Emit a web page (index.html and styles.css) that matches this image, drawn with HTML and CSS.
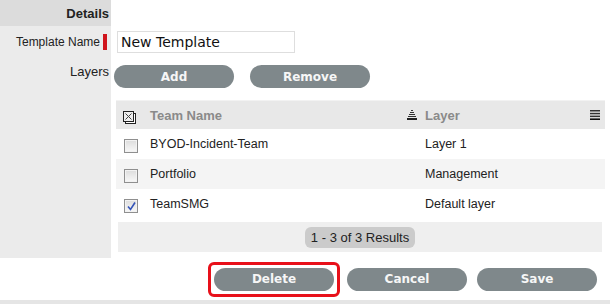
FILE: index.html
```html
<!DOCTYPE html>
<html lang="en">
<head>
    <meta charset="UTF-8">
    <title>Team Template</title>
    <link rel="stylesheet" href="styles.css">
</head>
<body>

<div class="form">
    <div class="label head">Details</div>
    <div class="field"></div>

    <div class="label name-label">Template Name<span class="req-bar"></span></div>
    <div class="field name-field">
        <input class="text-input" type="text" value="New Template">
    </div>

    <div class="label layers-label">Layers</div>
    <div class="field layers-field">
        <div class="btn-row">
            <button class="btn">Add</button>
            <button class="btn">Remove</button>
        </div>
        <table class="grid">
            <colgroup>
                <col class="col-check">
                <col class="col-name">
                <col>
            </colgroup>
            <thead>
                <tr>
                    <th>
                        <svg class="all-icon" width="13" height="13" viewBox="0 0 13 13">
                            <rect x="2.5" y="2.5" width="10" height="10" fill="#fff" stroke="#222"/>
                            <rect x="0.5" y="0.5" width="10" height="10" fill="#eee" stroke="#222"/>
                            <path d="M2.5 2.5 L8.5 8.5 M8.5 2.5 L2.5 8.5" stroke="#444" stroke-width="1"/>
                        </svg>
                    </th>
                    <th>Team Name</th>
                    <th>
                        <div class="th-layer">
                            <svg class="sort-icon" width="10" height="10" viewBox="0 0 10 10">
                                <rect x="4" y="0" width="2" height="1" fill="#333"/>
                                <rect x="3" y="2" width="4" height="1" fill="#333"/>
                                <rect x="2" y="4" width="6" height="1" fill="#333"/>
                                <rect x="1" y="6" width="8" height="1" fill="#333"/>
                                <rect x="0" y="8" width="10" height="2" fill="#222"/>
                            </svg>
                            <span>Layer</span>
                            <svg class="menu-icon" width="10" height="10" viewBox="0 0 10 10">
                                <rect x="0" y="0" width="10" height="1.5" fill="#333"/>
                                <rect x="0" y="2.8" width="10" height="1.5" fill="#333"/>
                                <rect x="0" y="5.6" width="10" height="1.5" fill="#333"/>
                                <rect x="0" y="8.4" width="10" height="1.6" fill="#111"/>
                            </svg>
                        </div>
                    </th>
                </tr>
            </thead>
            <tbody>
                <tr>
                    <td><span class="cbox"></span></td>
                    <td>BYOD-Incident-Team</td>
                    <td class="layer">Layer 1</td>
                </tr>
                <tr class="alt">
                    <td><span class="cbox"></span></td>
                    <td>Portfolio</td>
                    <td class="layer">Management</td>
                </tr>
                <tr>
                    <td>
                        <span class="cbox">
                            <svg width="11" height="11" viewBox="0 0 11 11">
                                <path d="M2 5.5 L4.5 8.5 L9 1.5" fill="none" stroke="#3554b8" stroke-width="1.6"/>
                            </svg>
                        </span>
                    </td>
                    <td>TeamSMG</td>
                    <td class="layer">Default layer</td>
                </tr>
            </tbody>
        </table>
        <div class="pager">
            <span class="pager-pill">1 - 3 of 3 Results</span>
        </div>
    </div>
</div>

<div class="actions">
    <div class="highlight">
        <button class="btn">Delete</button>
    </div>
    <button class="btn cancel">Cancel</button>
    <button class="btn">Save</button>
</div>
<div class="bottom-strip"></div>

</body>
</html>
```

FILE: styles.css
```css
body {
    margin: 0;
    width: 610px;
    height: 304px;
    overflow: hidden;
    background: white;
    font-family: "Liberation Sans", Arial, sans-serif;
    font-size: 13px;
    color: #222;
}
.form {
    display: grid;
    grid-template-columns: 111px 1fr;
    grid-template-rows: 26px 32px auto;
}
.label {
    background: #ebebeb;
    display: flex;
    justify-content: flex-end;
    align-items: center;
    padding-right: 2px;
    line-height: 15px;
    color: #222;
}
.label.head {
    background: #dcdcdc;
    font-weight: bold;
}
.name-label {
    font-size: 12px;
}
.req-bar {
    display: inline-block;
    width: 4px;
    height: 16px;
    background: #d0141c;
    margin-left: 3px;
    margin-right: 2px;
}
.layers-label {
    align-items: flex-start;
    padding-top: 6px;
}
.field {
    padding: 0 5px;
}
.name-field {
    padding-top: 5px;
}
.text-input {
    box-sizing: border-box;
    width: 178px;
    height: 22px;
    margin-left: 1px;
    border: 1px solid #dedede;
    padding: 0 3px;
    font-family: "DejaVu Sans", Verdana, sans-serif;
    font-size: 14px;
    color: #111;
    outline: none;
}
.layers-field {
    padding-bottom: 6px;
}
.btn-row {
    display: flex;
    gap: 16px;
    margin-top: 7px;
    margin-left: -2px;
}
.btn {
    width: 120px;
    height: 23px;
    border: none;
    border-radius: 12px;
    background: #7f888b;
    color: #f6f6f6;
    font-family: "DejaVu Sans", Verdana, sans-serif;
    font-size: 12px;
    font-weight: bold;
    padding: 0;
    cursor: pointer;
}
.grid {
    width: 100%;
    margin-top: 12px;
    border-collapse: collapse;
    border-top: 1px solid #f2f2f2;
}
.col-check {
    width: 34px;
}
.col-name {
    width: 257px;
}
.grid th {
    height: 28px;
    background: #e8e8e8;
    color: #8a8a8a;
    font-weight: bold;
    text-align: left;
    padding: 0;
}
.grid th:first-child {
    padding-left: 7px;
}
.all-icon {
    display: block;
    margin-top: 4px;
}
.th-layer {
    display: flex;
    align-items: center;
}
.sort-icon {
    margin-right: 8px;
}
.menu-icon {
    margin-left: auto;
    margin-right: 5px;
}
.grid td {
    height: 30px;
    padding: 0;
    font-size: 12.5px;
    color: #222;
}
.grid td:first-child {
    padding-left: 8px;
}
.grid td.layer {
    padding-left: 18px;
}
.grid tr.alt td {
    background: #f4f4f4;
}
.cbox {
    display: flex;
    align-items: center;
    justify-content: center;
    box-sizing: border-box;
    width: 14px;
    height: 14px;
    margin-top: 4px;
    border: 1px solid #8f8f8f;
    background: linear-gradient(#dcdcdc, #f8f8f8);
    box-shadow: inset 0 0 0 1px #f2f2f2;
}
.pager {
    display: flex;
    justify-content: center;
    align-items: center;
    height: 30px;
    margin: 3px 3px 0 2px;
    background: #efefef;
}
.pager-pill {
    background: #cbcbcb;
    border-radius: 6px;
    padding: 3px 6px;
    color: #222;
}
.actions {
    display: flex;
    justify-content: flex-end;
    align-items: center;
    height: 42px;
    padding-right: 13px;
    box-sizing: border-box;
}
.highlight {
    display: flex;
    padding: 3px;
    border: 3px solid #e8101a;
    border-radius: 6px;
    margin-right: 7px;
}
.cancel {
    margin-right: 10px;
}
.bottom-strip {
    height: 4px;
    background: #e5e5e5;
}
```
